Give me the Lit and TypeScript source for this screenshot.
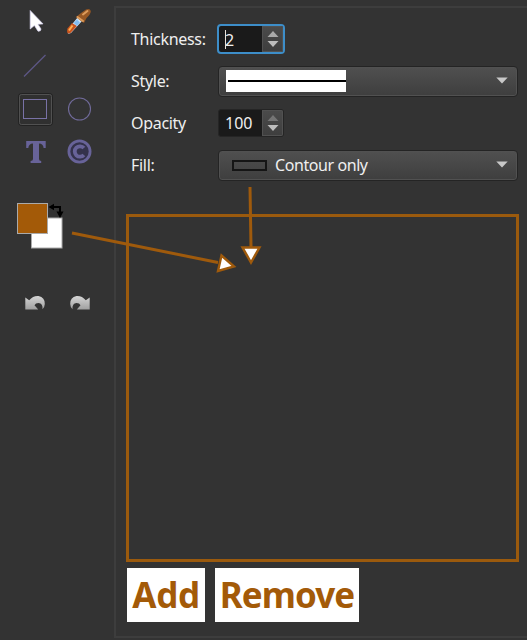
import { LitElement, html, css, svg } from "lit";
import { customElement, property } from "lit/decorators.js";

const icons: Record<string, unknown> = {
  pointer: svg`<path d="M16.2 10.5V29L20.4 25.4L24 31.2Q27 31.6 27 29L23.9 24.2L29 23.9Z" fill="#fff" stroke="#d7d2f0" stroke-width=".7"/>`,
  dropper: svg`<path d="M11 28L10 32Q9 35 13 33L24 21L20 17Z" fill="#cfe4f8"/><path d="M14 23L9.5 28.5Q8 35 12.5 33L19 26Z" fill="#c9541d"/><path d="M14.5 25.5l-3.5 5" stroke="#ffb154" stroke-width="2"/><path d="M19 19.5l3 3-3.2 3.4-3-2.8Z" fill="#83bdf0"/><path d="M23 13L28 9.5Q32 8 32.8 11Q33 14 28.5 18L26 23L23 21L18 17Z" fill="#985824"/><path d="M25 14.5l4.5-3.5M19.5 17l5.5 4" stroke="#dd9c5c" stroke-width="2" stroke-linecap="round"/>`,
  line: svg`<path d="M10 32.5L31.5 11" stroke="#5d5787" stroke-width="1.3"/>`,
  rect: svg`<rect x="9.5" y="11.5" width="23" height="19" fill="none" stroke="#7972a6"/>`,
  circle: svg`<circle cx="21.5" cy="21" r="11" fill="none" stroke="#706a99" stroke-width="1.1"/>`,
  text: svg`<path d="M12.2 10H31.7V17H29.6Q29.2 12.5 25 12.5V28Q25 30 27.2 30V32H16.6V30Q19 30 19 28V12.5Q14.8 12.5 14.3 17H12.2Z" fill="#686399"/>`,
  copyright: svg`<circle cx="21.5" cy="20.5" r="10.6" fill="#34324c" stroke="#686399" stroke-width="2.8"/><path d="M25.9 17.1A5.2 5.2 0 1 0 25.9 23.9" fill="none" stroke="#686399" stroke-width="3.8"/>`,
};

@customElement("tool-button")
class ToolButton extends LitElement {
  @property() name = "";
  static styles = css`
    :host { display: block; width: 44px; height: 43px; }
    svg { display: block; }
  `;
  render() {
    return html`<svg width="44" height="43" viewBox="0 0 44 43">
      ${this.name === "rect"
        ? svg`<rect x="4.5" y="5.5" width="34" height="32" rx="3" fill="#303030" stroke="#222"/><rect x="5.5" y="6.5" width="32" height="30" rx="2" fill="none" stroke="#515151"/>`
        : null}
      ${icons[this.name] ?? null}
    </svg>`;
  }
}

@customElement("spin-box")
class SpinBox extends LitElement {
  @property() value = "";
  @property({ type: Boolean, reflect: true }) focused = false;
  @property({ type: Boolean, reflect: true }) atmax = false;
  static styles = css`
    :host { display: flex; box-sizing: border-box; width: 66px; height: 28px; border: 1px solid #252525; border-radius: 3px; background: #1a1a1a; overflow: hidden; }
    :host([focused]) { width: 68px; height: 30px; margin-left: -1px; border: 2px solid #3d8ec9; border-radius: 4px; }
    .value { position: relative; flex: 1; padding-left: 6px; font-size: 16px; line-height: 27px; }
    :host([focused]) .value { line-height: 28px; }
    .caret { position: absolute; left: 6px; top: 4px; width: 1px; height: 19px; background: #e8e0d8; }
    .steps { width: 21px; display: flex; align-items: center; justify-content: center; background: linear-gradient(#4b4b4b, #3e3e3e); box-shadow: inset 0 0 0 1px #515151; }
  `;
  render() {
    return html`<div class="value">${this.value}${this.focused ? html`<span class="caret"></span>` : null}</div>
      <div class="steps"><svg width="12" height="18" viewBox="0 0 12 18">
        <path d="M.5 7L6 1L11.5 7Z" fill=${this.atmax ? "#747474" : "#aaa"}/><path d="M.5 11L6 17L11.5 11Z" fill="#bdbdbd"/>
      </svg></div>`;
  }
}

@customElement("combo-box")
class ComboBox extends LitElement {
  static styles = css`
    :host { display: flex; align-items: center; box-sizing: border-box; width: 300px; height: 31px; padding: 0 9px 0 7px; border: 1px solid #242424; border-radius: 4px; background: linear-gradient(#505050, #3e3e3e); box-shadow: inset 0 0 0 1px #515151; }
    .content { flex: 1; display: flex; align-items: center; letter-spacing: -0.42px; }
    svg { margin-bottom: 2px; }
  `;
  render() {
    return html`<div class="content"><slot></slot></div>
      <svg width="12" height="7" viewBox="0 0 12 7"><path d="M.3 .5H11.7L6 6.5Z" fill="#c8c8c8"/></svg>`;
  }
}

@customElement("app-root")
class AppRoot extends LitElement {
  static styles = css`
    :host { position: relative; display: flex; box-sizing: border-box; width: 527px; height: 640px; background: #333; color: #efefef; font: 16px/22px "Noto Sans", sans-serif; overflow: hidden; }
    .sidebar { width: 114px; flex: none; }
    .tools { display: grid; grid-template-columns: 44px 44px; grid-auto-rows: 43.5px; height: 202px; padding-left: 14px; box-sizing: border-box; }
    .tools tool-button:nth-child(5), .tools tool-button:nth-child(6) { padding-top: 1px; }
    .swatches, .history { display: block; }
    .panel { flex: 1; box-sizing: border-box; margin-top: 6px; height: 632px; border: 2px solid #3d3d3d; border-right: 0; padding: 10px 0 0 10px; }
    .form { display: grid; grid-template-columns: 87px 300px; grid-auto-rows: 42px; align-items: center; padding-left: 5px; height: 196px; box-sizing: border-box; }
    .label { white-space: nowrap; letter-spacing: -0.3px; }
    .stroke { width: 120px; height: 22px; background: #fff; display: flex; align-items: center; }
    .stroke::after { content: ""; width: 118px; height: 2px; margin: 0 0 1px 2px; background: #000; }
    .contour { box-sizing: border-box; width: 35px; height: 11px; margin: 0 8px 0 6px; border: 2px solid #151515; }
    .canvas { box-sizing: border-box; width: 393px; height: 348px; border: 3px solid #9b5a0d; }
    .actions { display: flex; gap: 10px; margin: 6px 0 0 1px; }
    .action { display: flex; align-items: center; justify-content: center; width: 78px; height: 54px; padding: 0; border: 0; background: #fff; color: #a35a08; font: 700 35px/54px "Noto Sans", sans-serif; letter-spacing: -0.3px; }
    .wide { width: 144px; letter-spacing: -0.9px; }
    .arrows { position: absolute; left: 0; top: 0; pointer-events: none; }
  `;
  render() {
    return html`
      <div class="sidebar">
        <div class="tools">
          ${["pointer", "dropper", "line", "", "rect", "circle", "text", "copyright"].map(
            (n) => html`<tool-button name=${n}></tool-button>`
          )}
        </div>
        <svg class="swatches" width="114" height="78" viewBox="0 202 114 78">
          <rect x="31.5" y="218" width="30.5" height="30" fill="#fff" stroke="#aaa"/>
          <rect x="17.5" y="203.5" width="30" height="30" fill="#a35a08" stroke="#aaa"/>
          <path d="M52 207H60V213" fill="none" stroke="#000" stroke-width="2"/>
          <path d="M48.5 207L54 203.8V210.2ZM60 218L56.5 211.5H63.5Z" fill="#000"/>
        </svg>
        <svg class="history" width="114" height="50" viewBox="0 280 114 50">
          <defs><linearGradient id="g" x1="0" y1="0" x2="0" y2="1"><stop offset="0" stop-color="#d5d5d5"/><stop offset="1" stop-color="#a0a0a0"/></linearGradient>
          <path id="u" d="M25.3 297.5L29.2 300.2Q33 295.6 38.5 296Q45 297.3 44.8 304Q44.7 307 42.5 309.3Q43 303.3 38.5 303Q35.5 303 34.5 305.2L38.2 309.5H25.3Z"/></defs>
          <use href="#u" fill="url(#g)"/>
          <use href="#u" fill="url(#g)" transform="matrix(-1 0 0 1 115 0)"/>
        </svg>
      </div>
      <div class="panel">
        <div class="form">
          <div class="label">Thickness:</div><spin-box value="2" focused></spin-box>
          <div class="label">Style:</div><combo-box><div class="stroke"></div></combo-box>
          <div class="label">Opacity</div><spin-box value="100" atmax></spin-box>
          <div class="label">Fill:</div><combo-box><div class="contour"></div>Contour only</combo-box>
        </div>
        <div class="canvas"></div>
        <div class="actions">
          <button class="action">Add</button>
          <button class="action wide">Remove</button>
        </div>
      </div>
      <svg class="arrows" width="527" height="640" viewBox="0 0 527 640" fill="none" stroke="#9f5a0c" stroke-width="3">
        <path d="M72 233L218 262.5M250 187L251 247"/>
        <path d="M221.5 255.5L218 271L234 266.5ZM242.5 247.5H259.5L251 262.5Z" fill="#fff" stroke-width="2.4"/>
      </svg>`;
  }
}
